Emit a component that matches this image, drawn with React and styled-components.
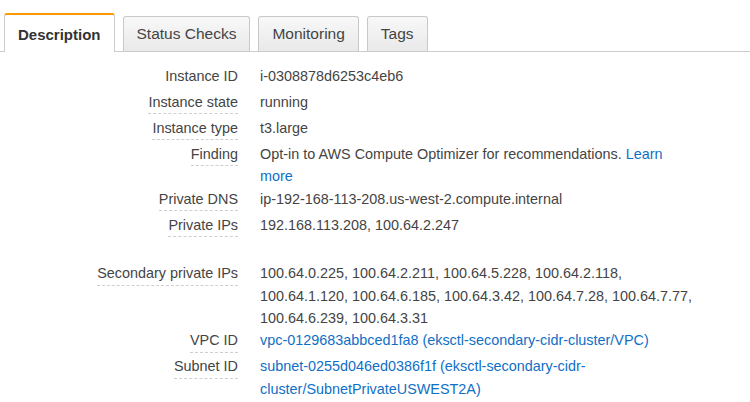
import React from "react";
import styled, { createGlobalStyle, css } from "styled-components";

const Global = createGlobalStyle`
  html, body { margin: 0; padding: 0; background: #fff; }
  body { font-family: "Liberation Sans", Arial, Helvetica, sans-serif; color: #444; }
`;

const Page = styled.div`
  width: 750px;
`;

const TabBar = styled.div`
  display: flex;
  align-items: flex-end;
  gap: 8px;
  padding: 13px 0 0 4px;
  border-bottom: 1px solid #cccccc;
`;

const Tab = styled.div`
  box-sizing: border-box;
  display: flex;
  align-items: center;
  padding: 0 13px;
  font-size: 15.5px;
  color: #444;
  border-radius: 3px 3px 0 0;
  border: 1px solid #c8c8c8;
  border-bottom: none;
  height: 35px;
  background: linear-gradient(#f8f8f8, #e9e9e9);
  ${(p) =>
    p.$active &&
    css`
      height: 39px;
      margin-bottom: -1px;
      background: #fff;
      border-top: 2px solid #f90;
      border-color: #f90 #cccccc #cccccc #cccccc;
      font-weight: bold;
      font-size: 15px;
      color: #333;
      padding-top: 1px;
    `}
`;

const Details = styled.div`
  display: grid;
  grid-template-columns: 238px 437px;
  column-gap: 22px;
  padding-top: 13px;
  font-size: 14.4px;
  line-height: 22.4px;
`;

const LabelCell = styled.div`
  display: flex;
  justify-content: flex-end;
  align-items: flex-start;
  padding-bottom: 2.6px;
`;

const Label = styled.span`
  display: block;
  color: #444;
  border-bottom: 1px dashed ${(p) => (p.$plain ? "transparent" : "#cfcfcf")};
`;

const Value = styled.div`
  color: #444;
`;

const Link = styled.a`
  color: #0f6fc6;
  text-decoration: none;
`;

const rows = [
  { label: "Instance ID", value: "i-0308878d6253c4eb6", plain: true },
  { label: "Instance state", value: "running" },
  { label: "Instance type", value: "t3.large" },
  {
    label: "Finding",
    value: (
      <>
        Opt-in to AWS Compute Optimizer for recommendations. <Link href="#">Learn more</Link>
      </>
    ),
  },
  { label: "Private DNS", value: "ip-192-168-113-208.us-west-2.compute.internal" },
  { label: "Private IPs", value: "192.168.113.208, 100.64.2.247" },
  { label: "", value: "\u00a0", blank: true },
  {
    label: "Secondary private IPs",
    value:
      "100.64.0.225, 100.64.2.211, 100.64.5.228, 100.64.2.118, 100.64.1.120, 100.64.6.185, 100.64.3.42, 100.64.7.28, 100.64.7.77, 100.64.6.239, 100.64.3.31",
  },
  {
    label: "VPC ID",
    value: <Link href="#">vpc-0129683abbced1fa8 (eksctl-secondary-cidr-cluster/VPC)</Link>,
  },
  {
    label: "Subnet ID",
    value: (
      <Link href="#">subnet-0255d046ed0386f1f (eksctl-secondary-cidr-cluster/SubnetPrivateUSWEST2A)</Link>
    ),
  },
];

export default function App() {
  return (
    <Page>
      <Global />
      <TabBar>
        <Tab $active>Description</Tab>
        <Tab>Status Checks</Tab>
        <Tab>Monitoring</Tab>
        <Tab>Tags</Tab>
      </TabBar>
      <Details>
        {rows.map((r, i) => (
          <React.Fragment key={i}>
            {r.blank ? (
              <div />
            ) : (
              <LabelCell>
                <Label $plain={r.plain}>{r.label}</Label>
              </LabelCell>
            )}
            <Value>{r.value}</Value>
          </React.Fragment>
        ))}
      </Details>
    </Page>
  );
}
